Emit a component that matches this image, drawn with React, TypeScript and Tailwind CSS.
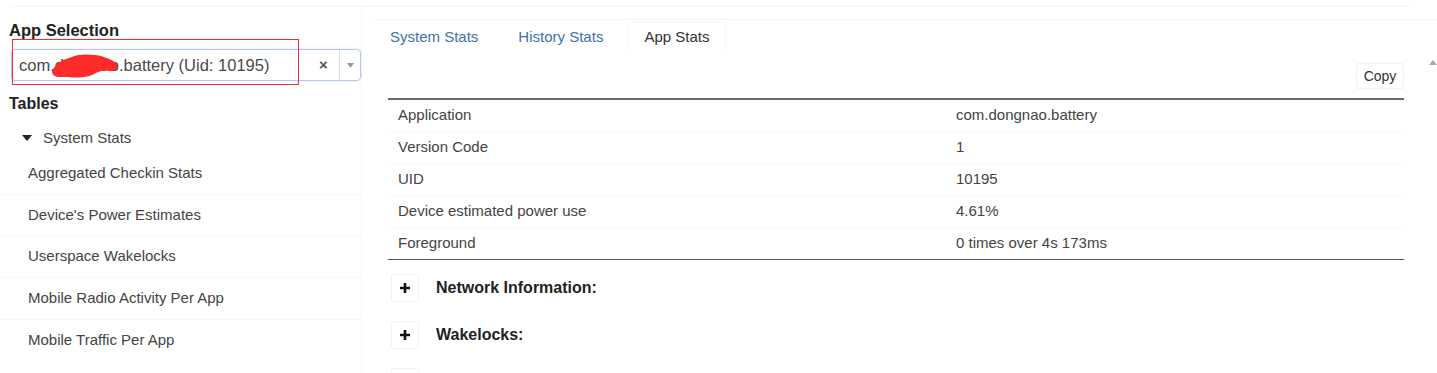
import React from "react";

const tables = [
  "Aggregated Checkin Stats",
  "Device's Power Estimates",
  "Userspace Wakelocks",
  "Mobile Radio Activity Per App",
  "Mobile Traffic Per App",
];

const appRows: [string, string][] = [
  ["Application", "com.dongnao.battery"],
  ["Version Code", "1"],
  ["UID", "10195"],
  ["Device estimated power use", "4.61%"],
  ["Foreground", "0 times over 4s 173ms"],
];

function PlusRow({ label }: { label: string }) {
  return (
    <div className="flex items-center h-[28px]">
      <div className="ml-[3px] w-[28px] h-[28px] flex items-center justify-center rounded-[3px] border border-[#f1f1f1] bg-white">
        <svg width="12" height="12" viewBox="0 0 12 12">
          <path d="M6 1v10M1 6h10" stroke="#111" strokeWidth="2.6" />
        </svg>
      </div>
      <span className="ml-[17px] text-[16px] font-bold text-[#222]">{label}</span>
    </div>
  );
}

export default function App() {
  return (
    <div className="relative w-[1437px] h-[373px] overflow-hidden bg-white text-[#444] font-['Liberation_Sans',Arial,sans-serif]">
      {/* top faint rule */}
      <div className="mt-[6px] mx-[10px] w-[1400px] border-t border-[#f4f4f4]" />

      <div className="flex">
        {/* Left column */}
        <div className="w-[362px] shrink-0 border-r border-[#f7f7f7]">
          <div className="mt-[13px] pl-[9px] h-[20px] leading-[20px] text-[16.5px] font-bold text-[#222]">
            App Selection
          </div>

          <div className="relative mt-[9px] ml-[11px] h-[32px] flex items-center rounded-[4px] border border-[#b7c9e2] shadow-[0_0_3px_rgba(102,150,220,0.25)]">
            <span className="pl-[7px] flex-1 text-[16.5px] text-[#4a4a4a] whitespace-nowrap">
              com.dongnao.battery (Uid: 10195)
            </span>
            <span className="w-[26px] pl-[6px] text-left text-[15px] font-bold text-[#555]">×</span>
            <div className="h-full w-[21px] border-l border-[#dcdcdc] flex items-center justify-center">
              <svg width="7" height="5" viewBox="0 0 7 5">
                <path d="M0 0h7L3.5 5z" fill="#999" />
              </svg>
            </div>
          </div>

          <div className="mt-[13px] pl-[9px] h-[20px] leading-[20px] text-[16px] font-bold text-[#222]">
            Tables
          </div>

          <div className="mt-[10px] h-[28px] flex items-center pl-[22px]">
            <svg width="10" height="6" viewBox="0 0 10 6">
              <path d="M0 0h10L5 6z" fill="#222" />
            </svg>
            <span className="ml-[11px] text-[15px] text-[#444]">System Stats</span>
          </div>

          <ul className="mt-[1px]">
            {tables.map((t, i) => (
              <li
                key={t}
                className={`h-[41.7px] flex items-center pl-[28px] text-[15px] text-[#444] ${
                  i < tables.length - 1 ? "border-b border-[#f7f7f7]" : ""
                }`}
              >
                {t}
              </li>
            ))}
          </ul>
        </div>

        {/* Right column */}
        <div className="flex-1 pl-[12px]">
          <div className="mt-[12px] border-t border-[#f5f5f5] pt-[2px] flex gap-2 h-[33px]">
            <div className="px-4 h-[30px] flex items-center text-[15px] text-[#3d72ad]">System Stats</div>
            <div className="px-4 h-[30px] flex items-center text-[15px] text-[#3d72ad]">History Stats</div>
            <div className="px-4 h-[30px] flex items-center text-[15px] text-[#333] border border-[#f7f7f7] border-b-white">
              App Stats
            </div>
          </div>

          <div className="ml-[14px] w-[1016px]">
            <div className="mt-[11px] flex justify-end">
              <button className="h-[26px] w-[48px] rounded-[3px] border border-[#f0f0f0] bg-white text-[14px] text-[#333]">
                Copy
              </button>
            </div>

            <table className="mt-[9px] w-full border-collapse border-t-2 border-b border-t-[#6b6b6b] border-b-[#555]">
              <tbody>
                {appRows.map(([k, v], i) => (
                  <tr
                    key={k}
                    className={`h-[32px] ${i < appRows.length - 1 ? "border-b border-[#f7f7f7]" : ""}`}
                  >
                    <td className="w-[558px] pl-[10px] text-[15px] text-[#444]">{k}</td>
                    <td className="pl-[10px] text-[15px] text-[#444]">{v}</td>
                  </tr>
                ))}
              </tbody>
            </table>

            <div className="mt-[14px] flex flex-col gap-[19px]">
              <PlusRow label="Network Information:" />
              <PlusRow label="Wakelocks:" />
              <div className="ml-[3px] w-[28px] h-[28px] rounded-[3px] border border-[#f1f1f1]" />
            </div>
          </div>
        </div>
      </div>

      {/* scroll arrow */}
      <svg className="absolute left-[1429px] top-[60px]" width="8" height="5" viewBox="0 0 8 5">
        <path d="M0 5h8L4 0z" fill="#aaa" />
      </svg>

      {/* redaction scribble */}
      <svg className="absolute left-[50px] top-[53px]" width="70" height="26" viewBox="0 0 70 26">
        <path
          d="M2 19 C4 12 11 7 19 5 C27 1 36 1 45 2 C53 3 61 6 66 10 C70 14 66 19 60 18 C54 17 50 18 46 20 C38 25 28 25 18 24 C10 24 3 25 2 19 Z"
          fill="#ff2a2a"
        />
      </svg>

      {/* annotation box */}
      <div className="absolute left-[12px] top-[39px] w-[287px] h-[46px] border border-[#f03030]" />
    </div>
  );
}
